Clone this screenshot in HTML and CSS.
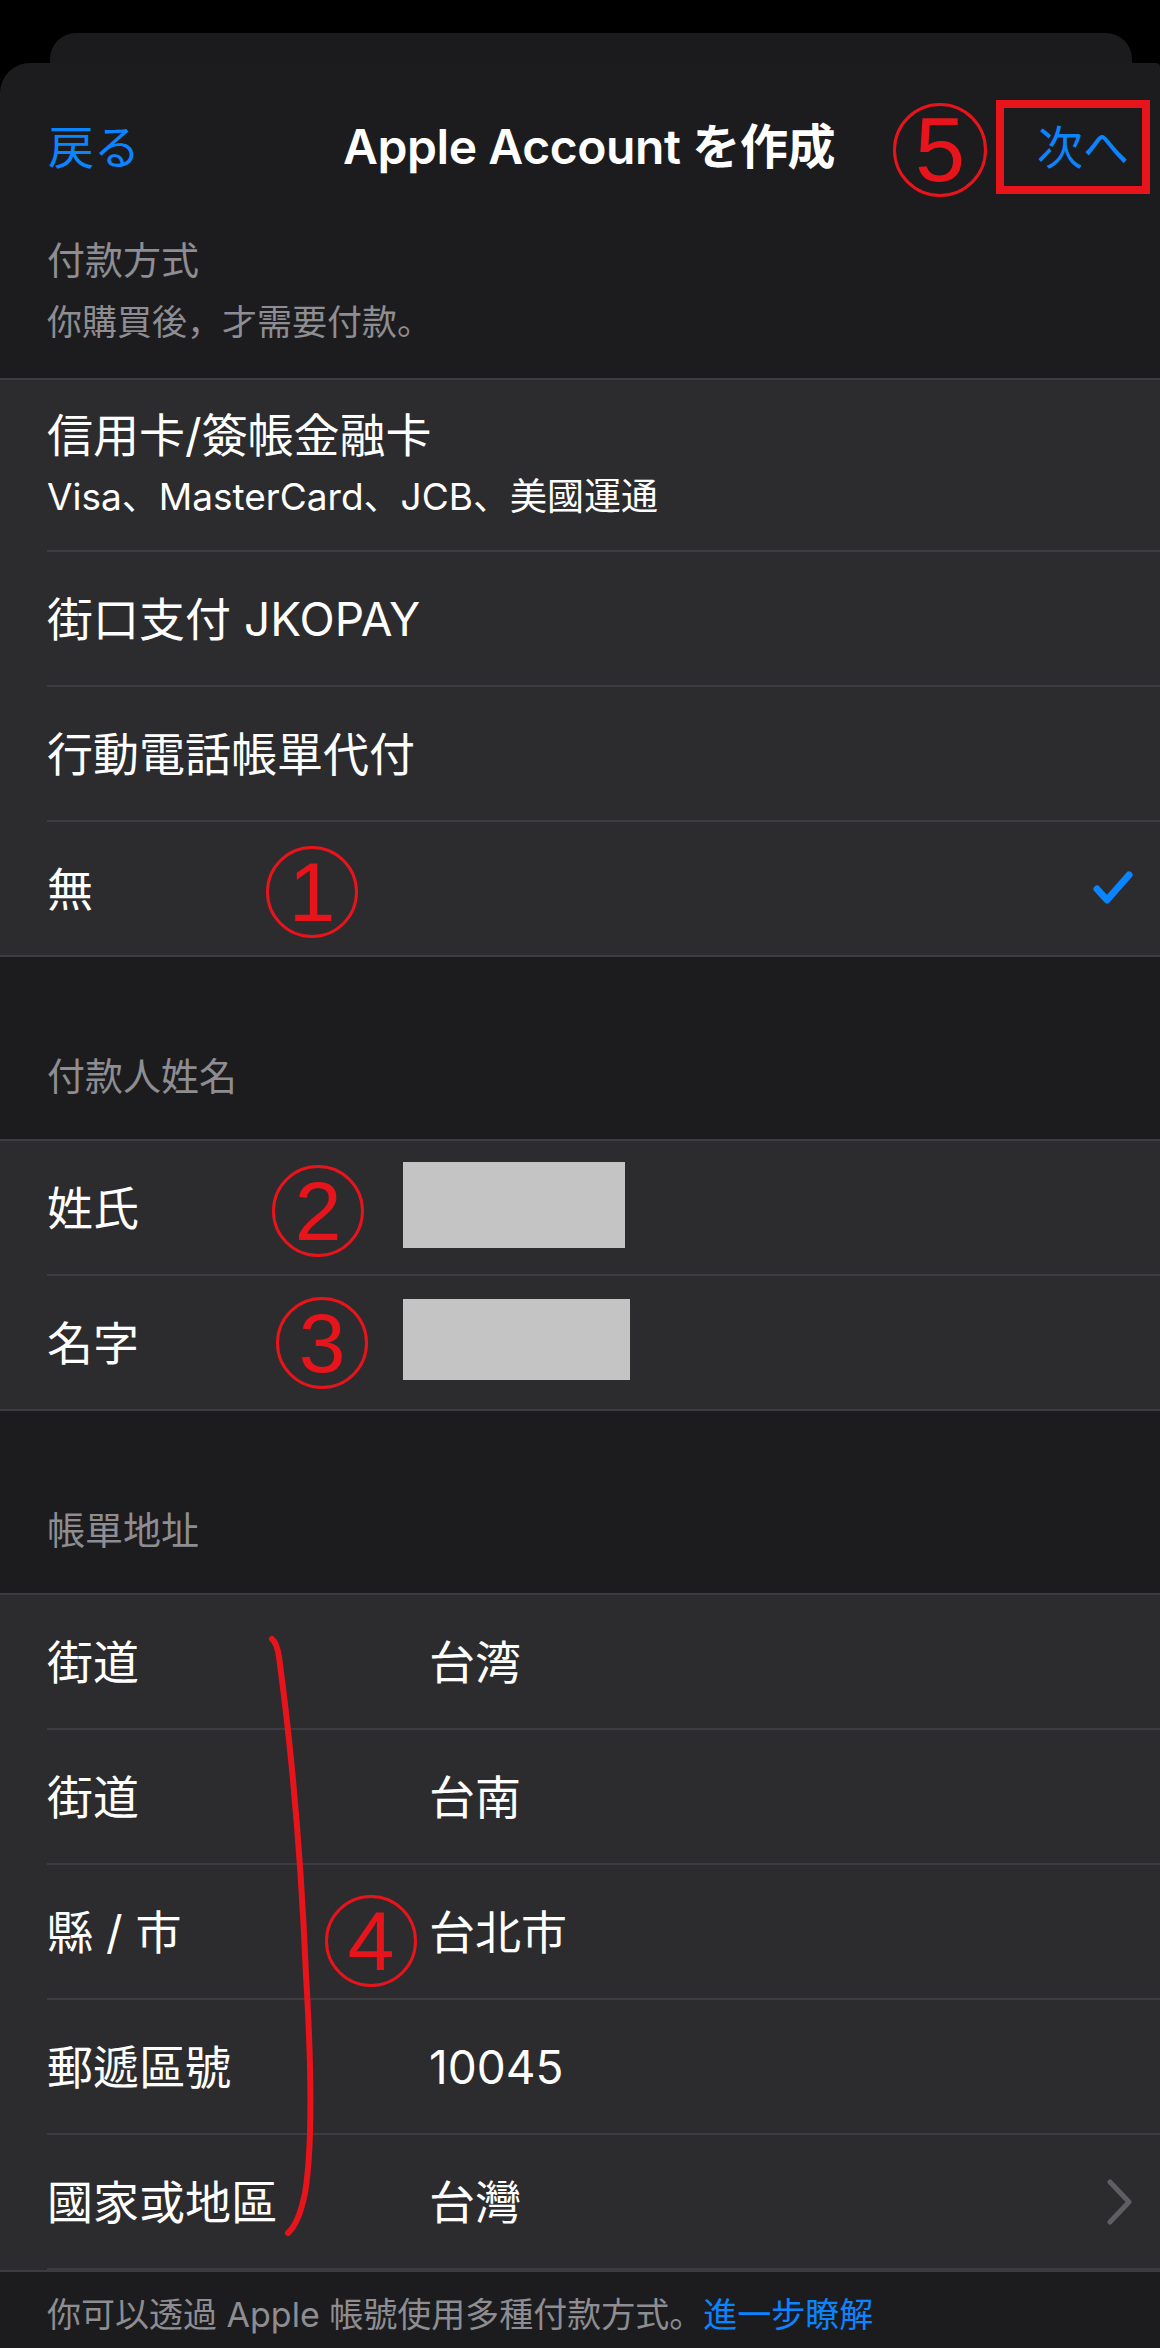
FILE: index.html
```html
<!DOCTYPE html>
<html lang="ja">
<head>
    <meta charset="UTF-8">
    <meta name="viewport" content="width=device-width, initial-scale=1.0">
    <title>Apple Account を作成</title>
    <link rel="stylesheet" href="styles.css">
</head>
<body>
    <div class="back-card"></div>
    <div class="sheet">
        <header class="nav">
            <span class="nav-back">戻る</span>
            <h1 class="nav-title">Apple Account を作成</h1>
            <span class="nav-next">次へ</span>
            <span class="mark mark-5">5</span>
        </header>

        <div class="section-head first">
            <p class="head-title">付款方式</p>
            <p class="head-note">你購買後，才需要付款。</p>
        </div>
        <section class="group">
            <div class="cell">
                <div class="cell-body stacked">
                    <span class="cell-title">信用卡/簽帳金融卡</span>
                    <span class="cell-sub">Visa、MasterCard、JCB、美國運通</span>
                </div>
            </div>
            <div class="cell">
                <div class="cell-body"><span class="cell-title">街口支付 JKOPAY</span></div>
            </div>
            <div class="cell">
                <div class="cell-body"><span class="cell-title">行動電話帳單代付</span></div>
            </div>
            <div class="cell">
                <div class="cell-body">
                    <span class="cell-title">無</span>
                    <svg class="check" width="40" height="36" viewBox="0 0 40 36">
                        <path d="M4 18 L14 29 L36 4" fill="none" stroke="#0a84ff" stroke-width="7" stroke-linecap="round" stroke-linejoin="round"/>
                    </svg>
                </div>
                <span class="mark mark-1">1</span>
            </div>
        </section>

        <div class="section-head">
            <p class="head-title">付款人姓名</p>
        </div>
        <section class="group names">
            <div class="cell">
                <div class="cell-body">
                    <span class="cell-label">姓氏</span>
                    <span class="redact"></span>
                </div>
                <span class="mark mark-2">2</span>
            </div>
            <div class="cell">
                <div class="cell-body">
                    <span class="cell-label">名字</span>
                    <span class="redact wide"></span>
                </div>
                <span class="mark mark-3">3</span>
            </div>
        </section>

        <div class="section-head">
            <p class="head-title">帳單地址</p>
        </div>
        <section class="group address">
            <div class="cell">
                <div class="cell-body"><span class="cell-label">街道</span><span class="cell-value">台湾</span></div>
            </div>
            <div class="cell">
                <div class="cell-body"><span class="cell-label">街道</span><span class="cell-value">台南</span></div>
            </div>
            <div class="cell">
                <div class="cell-body"><span class="cell-label">縣 / 市</span><span class="cell-value">台北市</span></div>
                <span class="mark mark-4">4</span>
            </div>
            <div class="cell">
                <div class="cell-body"><span class="cell-label">郵遞區號</span><span class="cell-value">10045</span></div>
            </div>
            <div class="cell">
                <div class="cell-body">
                    <span class="cell-label">國家或地區</span><span class="cell-value">台灣</span>
                    <svg class="chevron" width="26" height="46" viewBox="0 0 26 46">
                        <path d="M3 3 L22 23 L3 43" fill="none" stroke="#5e5e63" stroke-width="5" stroke-linecap="round" stroke-linejoin="round"/>
                    </svg>
                </div>
            </div>
            <svg class="brace" width="340" height="660" viewBox="0 0 340 660">
                <path d="M272 44 Q277 48 279 62 C 291 150, 301 262, 306 380 C 312 480, 312 556, 305 598 Q 299 628 288 638" fill="none" stroke="#e8141b" stroke-width="6" stroke-linecap="round"/>
            </svg>
        </section>

        <footer class="note">
            你可以透過 Apple 帳號使用多種付款方式。<span class="link">進一步瞭解</span>
        </footer>
    </div>
</body>
</html>
```
FILE: styles.css
```css
body {
    margin: 0;
    height: 2348px;
    background-color: #000000;
    color: #ffffff;
    font-family: 'Inter', 'Noto Sans CJK JP', sans-serif;
    overflow: hidden;
}

.back-card {
    height: 30px;
    margin: 33px 28px 0 50px;
    border-radius: 26px 26px 0 0;
    background-color: #1b1b1d;
}

.sheet {
    min-height: 2285px;
    background-color: #1c1c1e;
    border-radius: 30px 4px 0 0;
}

/* nav bar */
.nav {
    position: relative;
    height: 168px;
    display: grid;
    grid-template-columns: 1fr auto 1fr;
    align-items: center;
}

.nav-back {
    justify-self: start;
    padding-left: 48px;
    font-size: 46px;
    line-height: 56px;
    color: #0a84ff;
}

.nav-title {
    margin: 0;
    padding-left: 18px;
    font-size: 48px;
    font-weight: 600;
    line-height: 60px;
    letter-spacing: -0.4px;
}

.nav-next {
    justify-self: end;
    box-sizing: border-box;
    width: 154px;
    height: 94px;
    margin-right: 10px;
    padding-left: 33px;
    border: 8px solid #e8141b;
    font-size: 46px;
    line-height: 78px;
    color: #0a84ff;
}

/* section headers */
.section-head {
    height: 182px;
    box-sizing: border-box;
    padding: 0 47px 39px;
    display: flex;
    flex-direction: column;
    justify-content: flex-end;
}

.section-head.first {
    height: 147px;
    padding: 5px 47px 34px;
}

.head-title {
    margin: 0;
    font-size: 38px;
    line-height: 48px;
    color: #8d8d92;
}

.head-note {
    margin: 16px 0 0;
    font-size: 35px;
    line-height: 44px;
    color: #8d8d92;
}

/* grouped rows */
.group {
    position: relative;
    background-color: #2c2c2e;
    border-top: 2px solid #3d3d41;
    border-bottom: 2px solid #3d3d41;
}

.cell {
    position: relative;
    padding-left: 47px;
}

.cell-body {
    min-height: 133px;
    padding-right: 27px;
    border-bottom: 2px solid #3d3d41;
    display: flex;
    align-items: center;
    justify-content: space-between;
}

.cell:last-child .cell-body {
    border-bottom: none;
}

.cell-body.stacked {
    min-height: 170px;
    box-sizing: border-box;
    padding-top: 27px;
    padding-bottom: 30px;
    flex-direction: column;
    align-items: flex-start;
    justify-content: flex-start;
    gap: 11px;
}

.cell-title,
.cell-label,
.cell-value {
    font-size: 46px;
    line-height: 56px;
}

.cell-sub {
    font-size: 37px;
    line-height: 46px;
}

.names .cell-body,
.address .cell-body {
    justify-content: flex-start;
}

.names .cell-label {
    flex: 0 0 356px;
}

.address .cell-label {
    flex: 0 0 382px;
}

.redact {
    width: 222px;
    height: 86px;
    margin-top: -6px;
    background-color: #c4c4c4;
}

.redact.wide {
    width: 227px;
    height: 81px;
}

.chevron {
    margin-left: auto;
}

/* red annotations */
.mark {
    position: absolute;
    width: 92px;
    height: 92px;
    box-sizing: border-box;
    border: 3px solid #e8141b;
    border-radius: 50%;
    display: flex;
    align-items: center;
    justify-content: center;
    font-family: 'Liberation Sans', sans-serif;
    font-size: 84px;
    line-height: 1;
    color: #e8141b;
}

.mark-5 { left: 893px; top: 40px; width: 94px; height: 94px; font-size: 90px; }
.mark-1 { left: 266px; top: 24px; }
.mark-2 { left: 272px; top: 24px; }
.mark-3 { left: 276px; top: 21px; }
.mark-4 { left: 325px; top: 30px; }

.brace {
    position: absolute;
    left: 0;
    top: 0;
}

/* footer */
.note {
    padding: 21px 47px;
    font-size: 34px;
    line-height: 44px;
    color: #8d8d92;
}

.link {
    color: #0a84ff;
}
```
